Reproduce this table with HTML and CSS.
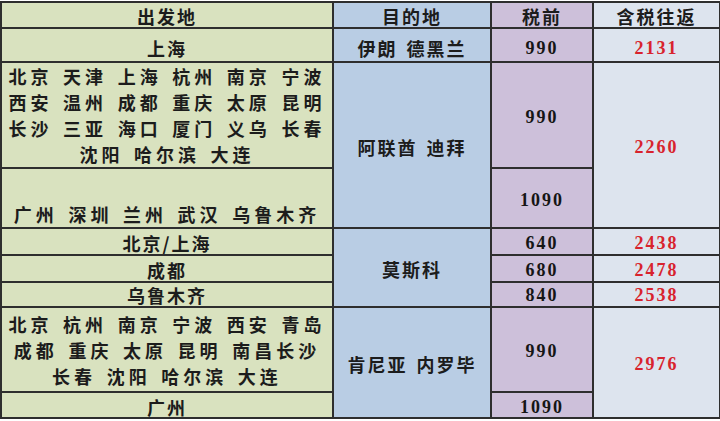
FILE: index.html
```html
<!DOCTYPE html>
<html lang="zh-CN">
<head>
<meta charset="utf-8">
<title>机票价格表</title>
<link rel="stylesheet" href="styles.css">
</head>
<body>
<table class="fares">
  <colgroup>
    <col class="c-from">
    <col class="c-to">
    <col class="c-pre">
    <col class="c-total">
  </colgroup>
  <tr class="r-head">
    <th class="from">出发地</th>
    <th class="to">目的地</th>
    <th class="pre">税前</th>
    <th class="total">含税往返</th>
  </tr>
  <tr class="r-1">
    <td class="from">上海</td>
    <td class="to">伊朗 德黑兰</td>
    <td class="pre num">990</td>
    <td class="total red">2131</td>
  </tr>
  <tr class="r-2">
    <td class="from list">北京 天津 上海 杭州 南京 宁波<br>西安 温州 成都 重庆 太原 昆明<br>长沙 三亚 海口 厦门 义乌 长春<br>沈阳 哈尔滨 大连</td>
    <td class="to" rowspan="2">阿联酋 迪拜</td>
    <td class="pre num">990</td>
    <td class="total red" rowspan="2">2260</td>
  </tr>
  <tr class="r-3">
    <td class="from list bottom">广州 深圳 兰州 武汉 乌鲁木齐</td>
    <td class="pre num">1090</td>
  </tr>
  <tr class="r-4">
    <td class="from">北京/上海</td>
    <td class="to" rowspan="3">莫斯科</td>
    <td class="pre num">640</td>
    <td class="total red">2438</td>
  </tr>
  <tr class="r-5">
    <td class="from">成都</td>
    <td class="pre num">680</td>
    <td class="total red">2478</td>
  </tr>
  <tr class="r-6">
    <td class="from">乌鲁木齐</td>
    <td class="pre num">840</td>
    <td class="total red">2538</td>
  </tr>
  <tr class="r-7">
    <td class="from list">北京 杭州 南京 宁波 西安 青岛<br>成都 重庆 太原 昆明 南昌长沙<br>长春 沈阳 哈尔滨 大连</td>
    <td class="to" rowspan="2">肯尼亚 内罗毕</td>
    <td class="pre num">990</td>
    <td class="total red" rowspan="2">2976</td>
  </tr>
  <tr class="r-8">
    <td class="from">广州</td>
    <td class="pre num">1090</td>
  </tr>
</table>
</body>
</html>
```

FILE: styles.css
```css
html, body {
  margin: 0;
  padding: 0;
  background: #ffffff;
}

body {
  padding-top: 1px;
  font-family: "Noto Sans CJK SC", "Noto Sans", sans-serif;
  color: #1c1c1c;
}

.fares {
  border-collapse: collapse;
  table-layout: fixed;
  width: 719px;
}

.c-from { width: 332px; }
.c-to { width: 158px; }
.c-pre { width: 102px; }
.c-total { width: 127px; }

.fares th,
.fares td {
  border: 2px solid #2e2e2e;
  padding: 3px 0 0;
  text-align: center;
  vertical-align: middle;
  font-size: 18px;
  font-weight: 700;
  line-height: 20px;
  letter-spacing: 2px;
  overflow: hidden;
  white-space: nowrap;
}

.fares th {
  padding-top: 1px;
}

.from { background: #d9e2bf; }
.to { background: #b9cde4; }
.pre { background: #cdc0da; }
.total { background: #dde4ee; }

.fares .list {
  padding: 0;
  line-height: 26px;
  letter-spacing: 4px;
  word-spacing: 2.5px;
}

.fares .bottom {
  vertical-align: bottom;
}

.fares .r-1 td {
  padding-top: 6px;
}

.fares .r-6 td {
  padding-top: 1px;
}

.fares .to {
  letter-spacing: 2px;
  word-spacing: 3px;
}

.fares .num {
  font-family: "Liberation Serif", "Times New Roman", serif;
  font-size: 18px;
  letter-spacing: 2px;
  color: #151515;
}

.fares .red {
  font-family: "Liberation Serif", "Times New Roman", serif;
  font-size: 18px;
  letter-spacing: 2px;
  color: #d8232d;
}

.r-head { height: 26px; }
.r-1 { height: 34px; }
.r-2 { height: 106px; }
.r-3 { height: 60px; }
.r-4 { height: 27px; }
.r-5 { height: 27px; }
.r-6 { height: 25px; }
.r-7 { height: 85px; }
.r-8 { height: 26px; }
```
